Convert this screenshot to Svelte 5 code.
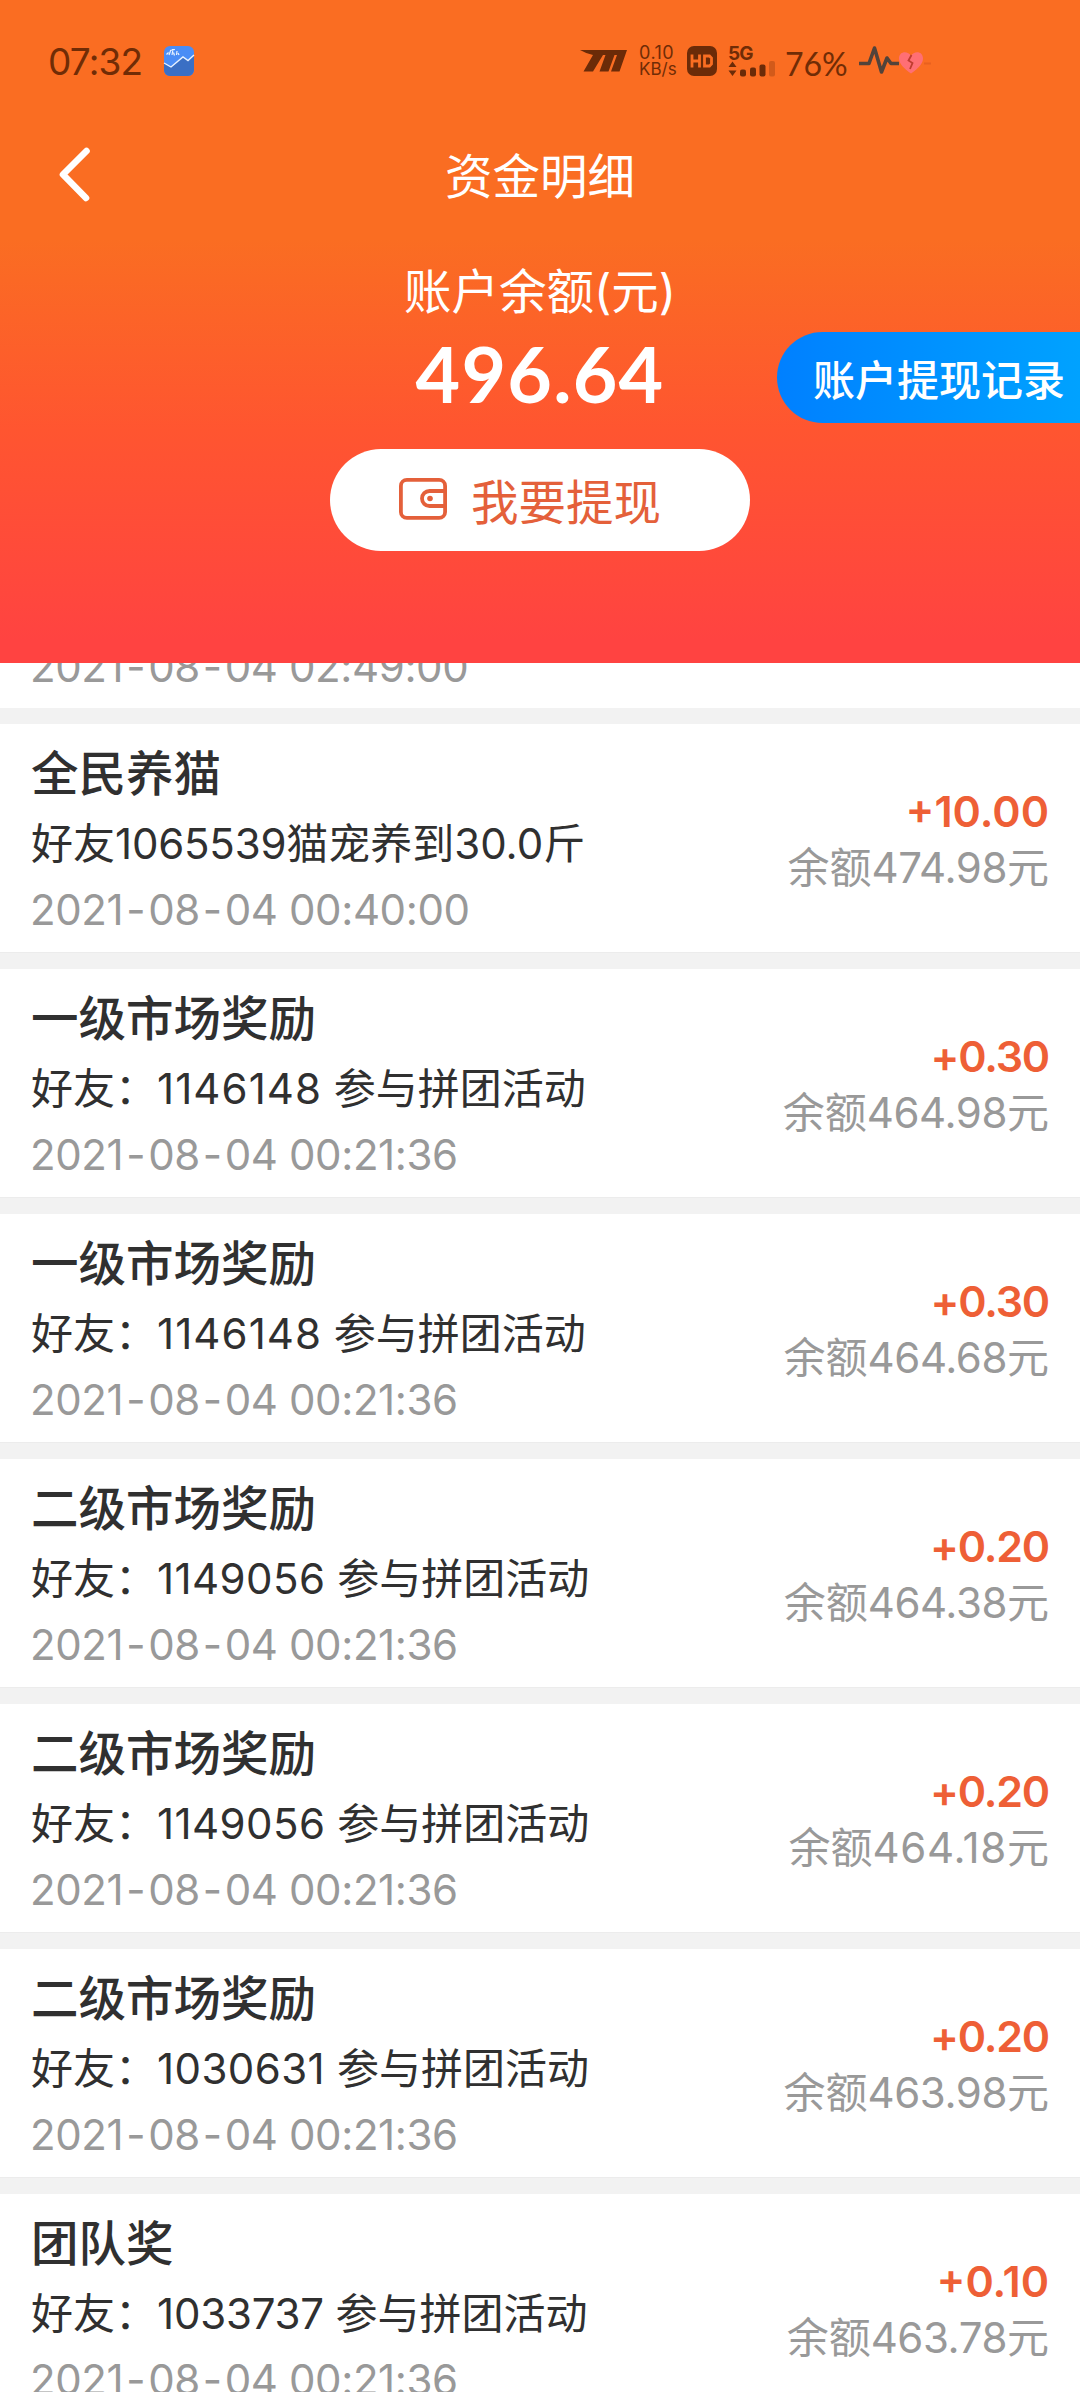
<script lang="ts">
	type Part = { text: string; num?: boolean };

	interface RecordItem {
		title: string;
		desc: Part[];
		time: string;
		amount: string;
		balance: string;
	}

	const friend = (id: string): Part[] => [
		{ text: '好友：' },
		{ text: id, num: true },
		{ text: ' 参与拼团活动' }
	];

	// The "1" is much narrower than the other digits, so even the numbers out
	function tracking(text: string, gain: number, base: number) {
		const ones = text.split('1').length - 1;
		return `letter-spacing: ${((ones * gain - base) / text.length).toFixed(2)}px`;
	}

	let balance = '496.64';

	const records: RecordItem[] = [
		{
			title: '全民养猫',
			desc: [
				{ text: '好友' },
				{ text: '1065539', num: true },
				{ text: '猫宠养到' },
				{ text: '30.0' },
				{ text: '斤' }
			],
			time: '2021-08-04 00:40:00',
			amount: '+10.00',
			balance: '474.98'
		},
		{ title: '一级市场奖励', desc: friend('1146148'), time: '2021-08-04 00:21:36', amount: '+0.30', balance: '464.98' },
		{ title: '一级市场奖励', desc: friend('1146148'), time: '2021-08-04 00:21:36', amount: '+0.30', balance: '464.68' },
		{ title: '二级市场奖励', desc: friend('1149056'), time: '2021-08-04 00:21:36', amount: '+0.20', balance: '464.38' },
		{ title: '二级市场奖励', desc: friend('1149056'), time: '2021-08-04 00:21:36', amount: '+0.20', balance: '464.18' },
		{ title: '二级市场奖励', desc: friend('1030631'), time: '2021-08-04 00:21:36', amount: '+0.20', balance: '463.98' },
		{ title: '团队奖', desc: friend('1033737'), time: '2021-08-04 00:21:36', amount: '+0.10', balance: '463.78' }
	];
</script>

{#snippet timestamp(value: string)}
	<div class="time">{#each value.split('-') as piece, i}{#if i > 0}<i>-</i>{/if}{piece}{/each}</div>
{/snippet}

<div class="page">
	<header>
		<div class="status-bar">
			<span class="clock">07:32</span>
			<svg class="app-icon" width="32" height="32" viewBox="0 0 32 32">
				<rect x="1" y="1" width="30" height="30" rx="6" fill="#4a8df6" />
				<path d="M1 18L8 22L20 12L25 15.500L31 10V25a6 6 0 0 1-6 6H7a6 6 0 0 1-6-6Z" fill="#3a6fc4" />
				<path d="M1 18L8 22L20 12L25 15.500L31 10" fill="none" stroke="#e8f2ff" stroke-width="1.400" />
				<path d="M3.500 9.500l2-2M6 10l1.500-4M9 10l1-6M11.500 10.500l-1-3M13.500 10l.5-4M16 10l-1-2M7 5.500l5-1" stroke="#e8f2ff" stroke-width="1.200" />
			</svg>

			<div class="indicators">
				<svg class="turbo" width="48" height="24" viewBox="0 0 48 24" fill="#6b2b08">
					<path d="M0 1H47L39.500 22.500H31L37 6H34.500L28.500 22.500H19.500L25.500 6H23L13 22.500H3.500L13 6Q7 5 0 1Z" />
				</svg>
				<span class="speed"><b>0.10</b><b>KB/s</b></span>
				<svg class="hd" width="30" height="30" viewBox="0 0 30 30">
					<rect width="30" height="30" rx="7" fill="#6b2b08" />
					<path d="M5 8.500V21.500M12.500 8.500V21.500M5 15H12.500M17.500 10H22.500L24.500 12V18L22.500 20H17.500Z" fill="none" stroke="#fa6e22" stroke-width="2.800" />
				</svg>
				<div class="signal">
					<span>5G</span>
					<svg width="48" height="16" viewBox="0 0 48 16" fill="#6b2b08">
						<path d="M0.500 6L4.500 0.500L8.500 6ZM0.500 9.500L4.500 15L8.500 9.500Z" />
						<rect x="12" y="8.500" width="6" height="7" rx="2" />
						<rect x="22" y="6.500" width="6" height="9" rx="2" />
						<rect x="31.500" y="3.500" width="6" height="12" rx="2" />
						<rect x="41" y="0" width="6" height="15.500" rx="2" opacity=".28" />
					</svg>
				</div>
				<span class="battery">76%</span>
				<svg class="pulse" width="74" height="32" viewBox="0 0 74 32">
					<path d="M1 18.500H11L16.500 3L23.500 27L29 13L33 18.500H41" fill="none" stroke="#52433a" stroke-width="3.600" stroke-linejoin="round" />
					<path d="M53 28.500C45 23 41 18 41 13.500C41 6 50 5.500 53 11C56 5.500 65 6 65 13.500C65 18 61 23 53 28.500Z" fill="#ff6f74" />
					<path d="M53.500 10L50.500 15.500L54.500 18L52 24" fill="none" stroke="#c03c30" stroke-width="1.800" />
					<path d="M66 18.500H73" stroke="#e8611f" stroke-width="2" />
				</svg>
			</div>
		</div>

		<nav>
			<svg class="back" width="34" height="58" viewBox="0 0 34 58">
				<path d="M28.500 5L5 28.500L28 52" fill="none" stroke="#fff" stroke-width="6.600" stroke-linecap="round" stroke-linejoin="round" />
			</svg>
			<h1>资金明细</h1>
		</nav>

		<div class="account">
			<p class="label">账户余额(元)</p>
			<div class="total-row">
				<strong class="total">{balance}</strong>
				<button class="history">账户提现记录</button>
			</div>
			<button class="withdraw">
				<svg width="48" height="42" viewBox="0 0 48 42" fill="none" stroke="#e4603a" stroke-width="3.800">
					<rect x="1.900" y="1.900" width="44.200" height="38" rx="6" />
					<path d="M46 13H30.500a7.500 7.500 0 0 0 0 15H46" />
					<circle cx="31" cy="20.500" r="2.800" fill="#e4603a" stroke="none" />
				</svg>
				<span>我要提现</span>
			</button>
		</div>
	</header>

	<main>
		<div class="scrolled">
			{@render timestamp('2021-08-04 02:49:00')}
		</div>
		{#each records as item}
			<article>
				<div class="info">
					<h2>{item.title}</h2>
					<p class="desc">{#each item.desc as part}<span style={part.num ? tracking(part.text, 4.5, 6) : null}>{part.text}</span>{/each}</p>
					{@render timestamp(item.time)}
				</div>
				<div class="money">
					<div class="amount" style={tracking(item.amount, 6, 6)}>{item.amount}</div>
					<div class="rest">余额<span style={tracking(item.balance, 6.5, 2.5)}>{item.balance}</span>元</div>
				</div>
			</article>
		{/each}
	</main>
</div>

<style>
	:global(body) {
		background: #fff;
	}

	.page {
		width: 1080px;
		height: 2392px;
		overflow: hidden;
		font-family: Inter, 'Noto Sans CJK SC', sans-serif;
		color: #303030;
	}

	h1,
	h2,
	p {
		margin: 0;
		font-weight: 400;
	}

	button {
		border: 0;
		font-family: inherit;
		cursor: pointer;
	}

	header {
		height: 663px;
		background: linear-gradient(#fa6d22 0, #fa6d22 240px, #ff5530 430px, #ff4341 640px);
	}

	.status-bar {
		display: flex;
		align-items: center;
		height: 122px;
		padding-left: 48px;
		color: #702c06;
	}

	.clock {
		width: 115px;
		font-size: 37px;
		letter-spacing: -0.8px;
	}

	.indicators {
		display: flex;
		align-items: center;
		margin-left: 385px;
	}

	.speed {
		display: flex;
		flex-direction: column;
		width: 48px;
		margin-left: 11px;
		font-size: 18px;
		line-height: 17px;
	}

	.speed b {
		font-weight: 400;
	}

	.speed b:first-child {
		letter-spacing: 0.5px;
	}

	.speed b:last-child {
		font-size: 17px;
	}

	.signal {
		display: flex;
		flex-direction: column;
		margin-left: 11px;
		width: 57px;
	}

	.signal span {
		font-size: 19px;
		font-weight: 700;
		line-height: 15px;
		letter-spacing: -0.8px;
	}

	.battery {
		width: 73px;
		padding-top: 5px;
		font-family: Lato, sans-serif;
		font-size: 32px;
	}

	nav {
		display: grid;
		grid-template-columns: 150px 1fr 150px;
		align-items: center;
		height: 106px;
	}

	.back {
		margin-left: 58px;
	}

	h1 {
		padding-top: 4px;
		color: #fff;
		font-size: 47.5px;
		line-height: 68px;
		text-align: center;
	}

	.account {
		display: flex;
		flex-direction: column;
		align-items: center;
		padding-top: 30px;
		color: #fff;
	}

	.label {
		font-size: 47.5px;
		line-height: 68px;
	}

	.total-row {
		display: grid;
		grid-template-columns: 303px 1fr 303px;
		align-items: center;
		width: 100%;
		height: 102px;
	}

	.total {
		grid-column: 2;
		padding-bottom: 8px;
		text-align: center;
		font-family: Lato, sans-serif;
		font-size: 77px;
		font-weight: 700;
		line-height: 94px;
		letter-spacing: 1.2px;
	}

	.history {
		height: 91px;
		padding: 0 0 0 36px;
		border-radius: 46px 0 0 46px;
		background: linear-gradient(90deg, #0080ff, #00a2ff);
		color: #fff;
		font-size: 42px;
		font-weight: 500;
		text-align: left;
	}

	.withdraw {
		display: flex;
		align-items: center;
		gap: 24px;
		width: 420px;
		height: 102px;
		margin-top: 21px;
		padding: 0 0 2px 69px;
		border-radius: 51px;
		background: #fff;
		color: #e4603a;
		font-size: 47.5px;
	}

	main {
		height: 1729px;
		overflow: hidden;
	}

	.scrolled {
		display: flex;
		align-items: flex-end;
		height: 45px;
		padding: 0 31px;
		overflow: hidden;
		border-bottom: 16px solid #f2f2f2;
	}

	.scrolled .time {
		margin-bottom: 11px;
	}

	article {
		display: flex;
		justify-content: space-between;
		align-items: center;
		height: 229px;
		padding: 0 31px;
		border-bottom: 16px solid #f2f2f2;
		box-shadow: inset 0 -1px #ececec;
	}

	.info {
		padding-top: 2px;
	}

	h2 {
		font-size: 47.5px;
		font-weight: 500;
		line-height: 68px;
	}

	.desc {
		font-size: 42px;
		line-height: 72px;
		white-space: pre;
	}

	.time {
		margin-left: -1px;
		color: #999;
		font-size: 42px;
		line-height: 60px;
		letter-spacing: -0.4px;
	}

	.time i {
		padding: 0 3px;
		font-style: normal;
	}

	.money {
		padding-top: 1px;
		text-align: right;
	}

	.amount {
		color: #ee5f36;
		font-size: 43px;
		font-weight: 600;
		line-height: 57px;
	}

	.rest {
		color: #999;
		font-size: 42px;
		line-height: 56px;
	}
</style>
